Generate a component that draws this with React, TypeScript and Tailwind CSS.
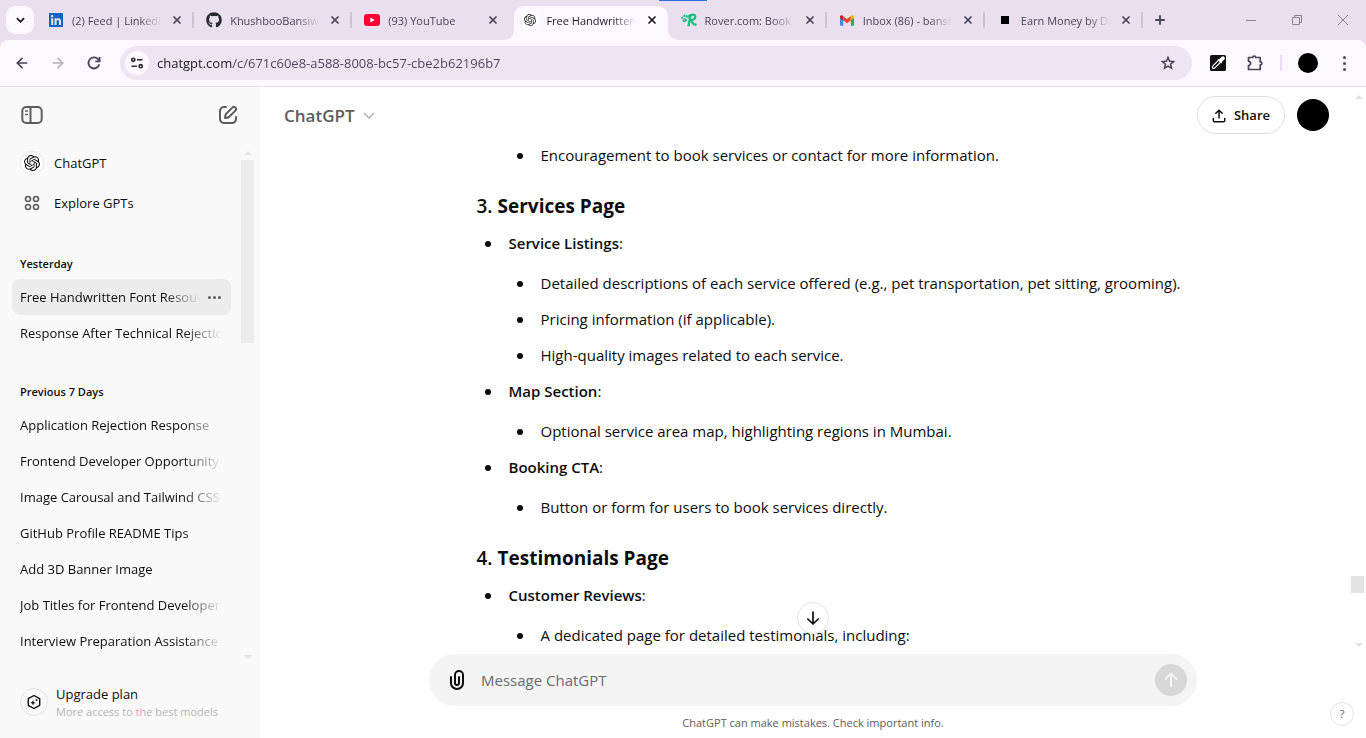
import type { ReactNode } from "react";
import { FaGithub, FaLinkedin } from "react-icons/fa";
import { SiOpenai } from "react-icons/si";
import { ArrowLeft, ArrowRight, Plus, X } from "lucide-react";

type Tab = { title: string; icon: ReactNode; active?: boolean; divider?: boolean };

const GmailIcon = () => (
  <svg viewBox="0 0 24 18" className="h-[11px] w-[14px]">
    <path fill="#4285f4" d="M0 3v13.4C0 17.3.7 18 1.600 18H5.500V7z" />
    <path fill="#34a853" d="M18.500 7v11h3.900c.9 0 1.600-.7 1.600-1.600V3z" />
    <path fill="#ea4335" d="M5.500 8.600V1.600L12 6.500l6.500-4.900v7L12 13.500z" />
    <path fill="#c5221f" d="M0 2.500C0 .3 2.500-.8 4.200.6L5.500 1.600v7L0 4.500z" />
    <path fill="#fbbc04" d="M24 2.500c0-2.200-2.500-3.300-4.200-1.900l-1.300 1v7L24 4.500z" />
  </svg>
);

const RoverIcon = () => (
  <svg viewBox="0 0 16 14" className="h-[14px] w-4">
    <g fill="#0fbf7a">
      <ellipse cx="1.300" cy="5" rx="1" ry="1.300" />
      <ellipse cx="3.300" cy="2.900" rx="1" ry="1.400" />
      <ellipse cx="5.700" cy="3.400" rx="0.9" ry="1.300" />
      <path d="M1.800 7.800C2 5.700 4 4.800 5.300 5.800c1 .9.700 2.600-.4 2.700-1 0-1 .6-1.800.6s-1.400-.6-1.300-1.300z" />
    </g>
    <path
      d="M9.500 2.300 7.600 12.500M7.400 3.600c2-2.200 7-3 6.900.2-.1 2.300-2.800 3.300-5 3.300M10.500 7.300c.8 2.300 1.800 4.800 4.200 4.300"
      fill="none"
      stroke="#0fbf7a"
      strokeWidth="2.200"
      strokeLinecap="round"
    />
  </svg>
);

const tabs: Tab[] = [
  { title: "(2) Feed | LinkedIn", icon: <FaLinkedin className="size-4 text-[#0a66c2]" />, divider: true },
  { title: "KhushbooBansiwal", icon: <FaGithub className="size-4 text-[#24292f]" />, divider: true },
  {
    title: "(93) YouTube",
    icon: (
      <svg viewBox="0 0 16 12" className="h-3 w-4">
        <rect width="16" height="12" rx="3" fill="#ff0033" />
        <path d="M6.300 3.500v5L10.700 6z" fill="#fff" />
      </svg>
    ),
  },
  {
    title: "Free Handwritten Font",
    icon: (
      <span className="flex size-4 items-center justify-center rounded-sm bg-white">
        <SiOpenai className="size-3 text-[#222]" />
      </span>
    ),
    active: true,
  },
  { title: "Rover.com: Book Pet", icon: <RoverIcon />, divider: true },
  { title: "Inbox (86) - bansiwal", icon: <GmailIcon />, divider: true },
  { title: "Earn Money by Doing", icon: <span className="size-2 bg-black" />, divider: true },
];

const TabCurve = ({ flip }: { flip?: boolean }) => (
  <svg
    viewBox="0 0 10 10"
    className={
      flip
        ? "absolute -right-[10px] bottom-0 size-[10px] -scale-x-100"
        : "absolute bottom-0 -left-[10px] size-[10px]"
    }
  >
    <path d="M10 0v10H0A10 10 0 0 0 10 0z" fill="#fdf7ff" />
  </svg>
);

function TabStrip() {
  return (
    <div className="relative flex h-10 items-stretch bg-[#e9dfee] pl-[6px]">
      <div className="absolute top-0 left-1/2 -ml-6 h-px w-12 bg-[#2f6fd6]" />
      <button
        aria-label="Search tabs"
        className="mt-[6px] mr-px flex size-7 shrink-0 items-center justify-center rounded-[9px] bg-[#fdf7ff]"
      >
        <svg viewBox="0 0 10 6" className="h-[6px] w-[9px]" fill="none" stroke="#1d1b20" strokeWidth="2">
          <path d="M1 1l4 4 4-4" />
        </svg>
      </button>
      <div className="flex min-w-0 flex-[0_1_1107px]">
        {tabs.map((tab) => (
          <div key={tab.title} className="relative flex min-w-0 flex-1 items-end pl-[3px]">
            <div
              className={
                tab.active
                  ? "relative ml-[2px] flex h-[34px] min-w-0 flex-1 items-center rounded-t-[10px] bg-[#fdf7ff] pr-[10px] pb-[6px] pl-2"
                  : "ml-[2px] flex h-[34px] min-w-0 flex-1 items-center pr-[10px] pb-[6px] pl-2"
              }
            >
              {tab.active && <TabCurve />}
              {tab.active && <TabCurve flip />}
              <span className="flex w-4 shrink-0 items-center justify-center">{tab.icon}</span>
              <span
                className={
                  tab.active
                    ? "ml-2 min-w-0 flex-1 overflow-hidden mask-r-from-75% pt-[2px] text-[11px] leading-4 whitespace-nowrap text-[#1d1b20]"
                    : "ml-2 min-w-0 flex-1 overflow-hidden mask-r-from-75% pt-[2px] text-[11px] leading-4 whitespace-nowrap text-[#4a4458]"
                }
              >
                {tab.title}
              </span>
              <button aria-label="Close tab" className="ml-[10px] flex size-3 shrink-0 items-center justify-center">
                <X className={tab.active ? "size-3 text-[#1d1b20]" : "size-3 text-[#4a4458]"} strokeWidth={3.5} />
              </button>
            </div>
            {tab.divider && <span className="absolute top-3 -right-px h-4 w-[2px] rounded-full bg-[#cbc3cf]" />}
          </div>
        ))}
      </div>
      <button aria-label="New tab" className="ml-2 flex w-5 shrink-0 items-center justify-center">
        <Plus className="size-[14px] text-[#4a4458]" strokeWidth={3.2} />
      </button>
      <div className="flex-1" />
      <div className="flex shrink-0 text-[#8a838f]">
        <button aria-label="Minimize" className="flex w-[46px] items-center justify-center">
          <span className="h-px w-[10px] bg-[#8a838f]" />
        </button>
        <button aria-label="Restore" className="flex w-[46px] items-center justify-center">
          <svg viewBox="0 0 10 10" className="size-[10px]" fill="none" stroke="currentColor">
            <path d="M.5 2.500h7v7h-7zM2.500 2.500v-2h7v7h-2" />
          </svg>
        </button>
        <button aria-label="Close" className="flex w-[46px] items-center justify-center">
          <svg viewBox="0 0 10 10" className="size-[10px]" fill="none" stroke="currentColor">
            <path d="M0 0l10 10M10 0L0 10" />
          </svg>
        </button>
      </div>
    </div>
  );
}

function Toolbar() {
  return (
    <div className="bg-[#e9dfee]">
      <div className="flex h-[47px] items-center rounded-t-[8px] border-b border-[#e6dfe9] bg-[#fdf7ff] px-[14px]">
        <button aria-label="Back" className="flex w-4 justify-center">
          <ArrowLeft className="size-4 text-[#4a4458]" strokeWidth={2.5} />
        </button>
        <button aria-label="Forward" className="ml-5 flex w-4 justify-center">
          <ArrowRight className="size-4 text-[#b5aeb9]" strokeWidth={2.5} />
        </button>
        <button aria-label="Reload" className="ml-5 flex w-4 justify-center">
          <svg viewBox="0 0 16 16" className="size-4" fill="none" stroke="#4a4458" strokeWidth="1.800">
            <path d="M13.300 9.300A5.500 5.500 0 1 1 12 4.200l1.500 1.600" />
            <path d="M13.600 2v4.300H9.300" />
          </svg>
        </button>
        <div className="ml-[18px] flex h-[34px] min-w-0 flex-1 items-center rounded-full bg-[#ede5f1] pr-[15px] pl-[5px]">
          <button aria-label="Site information" className="flex size-6 shrink-0 items-center justify-center rounded-full bg-[#fdf7ff]">
            <svg viewBox="0 0 14 12" className="h-3 w-[14px]" fill="none" stroke="#2b2730" strokeWidth="1.600">
              <circle cx="3.300" cy="2.800" r="1.600" />
              <path d="M7 2.800h5.500M1.500 9.200H7" />
              <circle cx="10.700" cy="9.200" r="1.600" />
            </svg>
          </button>
          <input
            type="text"
            aria-label="Address"
            defaultValue="chatgpt.com/c/671c60e8-a588-8008-bc57-cbe2b62196b7"
            className="ml-2 min-w-0 flex-1 bg-[linear-gradient(90deg,#1d1b20_76px,#4a4458_76px)] bg-clip-text pt-[2px] text-[13px] text-transparent outline-none"
          />
          <button aria-label="Bookmark this tab" className="flex shrink-0">
            <svg viewBox="0 0 24 24" className="size-[18px]" fill="#4a4458">
              <path d="m8.850 16.825 3.150-1.900 3.150 1.925-.825-3.600 2.775-2.400-3.650-.325-1.450-3.400-1.450 3.375-3.650.325 2.775 2.425zM5.825 21l1.625-7.025L2 9.250l7.200-.625L12 2l2.800 6.625 7.200.625-5.450 4.725L18.175 21 12 17.275z" />
            </svg>
          </button>
        </div>
        <button aria-label="Color picker extension" className="ml-[18px] flex">
          <svg viewBox="0 0 16 16" className="size-4">
            <rect width="16" height="16" rx="1.500" fill="#111" />
            <path d="M8.600 5.200 3.400 10.400c-.9.900-1.300 2.200-.8 2.800.6.600 1.900.1 2.800-.8l5.200-5.200z" fill="none" stroke="#fff" strokeWidth="1.200" />
            <path d="M7.600 4.300 9.400 4l2-2.100c1-1 2.400-.8 3 0s.6 2-.3 2.900L12 6.800l-.4 1.800z" fill="#fff" />
          </svg>
        </button>
        <button aria-label="Extensions" className="ml-5 flex">
          <svg viewBox="0 0 18 18" className="size-[18px]" fill="none" stroke="#4a4458" strokeWidth="1.700" strokeLinejoin="round">
            <path d="M2.500 3.500h4.300c0-2 2.900-2 2.900 0h4.500v4.400c2.200 0 2.200 3 0 3v4.600H2.500v-4c2.800-.4 2.800-4 0-4.200z" />
          </svg>
        </button>
        <span className="ml-4 h-4 w-[2px] bg-[#eadcfb]" />
        <button aria-label="Profile" className="ml-4 size-5 rounded-full bg-black" />
        <button aria-label="Browser menu" className="ml-[18px] flex w-4 flex-col items-center gap-[3px]">
          <span className="size-[3px] rounded-full bg-[#4a4458]" />
          <span className="size-[3px] rounded-full bg-[#4a4458]" />
          <span className="size-[3px] rounded-full bg-[#4a4458]" />
        </button>
      </div>
    </div>
  );
}

const groups = [
  { label: "Yesterday", items: ["Free Handwritten Font Resources", "Response After Technical Rejection"] },
  {
    label: "Previous 7 Days",
    items: [
      "Application Rejection Response",
      "Frontend Developer Opportunity",
      "Image Carousal and Tailwind CSS",
      "GitHub Profile README Tips",
      "Add 3D Banner Image",
      "Job Titles for Frontend Developer",
      "Interview Preparation Assistance",
    ],
  },
];

const ScrollArrow = ({ down }: { down?: boolean }) => (
  <svg viewBox="0 0 8 4" className={down ? "h-1 w-2 rotate-180" : "h-1 w-2"}>
    <path d="M0 4l4-4 4 4z" fill="#e3e3e3" />
  </svg>
);

function Sidebar() {
  return (
    <aside className="flex w-[260px] shrink-0 flex-col bg-[#f9f9f9]">
      <div className="flex h-14 shrink-0 items-center justify-between px-5 text-[#5d5d5d]">
        <button aria-label="Close sidebar" className="flex">
          <svg viewBox="0 0 24 24" className="size-6" fill="none" stroke="currentColor" strokeWidth="2" strokeLinecap="round">
            <rect x="2.300" y="4" width="19.400" height="16" rx="4" />
            <path d="M10.500 4v16" />
            <path d="M5.700 8h1.600M5.700 11.500h1.600" strokeWidth="1.600" />
          </svg>
        </button>
        <button aria-label="New chat" className="flex">
          <svg viewBox="0 0 24 24" className="size-6" fill="currentColor" fillRule="evenodd">
            <path d="M15.673 3.913a3.121 3.121 0 1 1 4.414 4.414l-5.937 5.937a5 5 0 0 1-2.829 1.415l-2.180.311a1 1 0 0 1-1.131-1.131l.311-2.180A5 5 0 0 1 9.736 9.850zm3 1.414a1.121 1.121 0 0 0-1.586 0l-5.937 5.937a3 3 0 0 0-.849 1.697l-.123.860.860-.123a3 3 0 0 0 1.698-.849l5.937-5.936a1.121 1.121 0 0 0 0-1.586zM11 4A1 1 0 0 1 10 5c-.998 0-1.702.008-2.253.060-.54.052-.862.141-1.109.267a3 3 0 0 0-1.311 1.311c-.134.263-.226.611-.276 1.216C5.001 8.471 5 9.263 5 10.400v3.200c0 1.137.001 1.929.051 2.546.050.605.142.953.276 1.216a3 3 0 0 0 1.311 1.311c.263.134.611.226 1.216.276.617.050 1.409.051 2.546.051h3.200c1.137 0 1.929-.001 2.546-.051.605-.050.953-.142 1.216-.276a3 3 0 0 0 1.311-1.311c.126-.247.215-.569.266-1.109.053-.551.060-1.255.061-2.254a1 1 0 1 1 2 .002c-.001.978-.007 1.780-.070 2.442-.064.673-.192 1.271-.475 1.827a5 5 0 0 1-2.185 2.185c-.592.302-1.232.428-1.961.487-.708.058-1.582.058-2.666.058h-3.286c-1.084 0-1.958 0-2.666-.058-.729-.059-1.369-.185-1.961-.487a5 5 0 0 1-2.185-2.185c-.302-.592-.428-1.232-.487-1.961C3 15.601 3 14.727 3 13.643v-3.286c0-1.084 0-1.958.058-2.666.059-.729.185-1.369.487-1.961A5 5 0 0 1 5.730 3.545c.556-.283 1.154-.411 1.827-.475C8.219 3.007 9.021 3.001 10 3a1 1 0 0 1 1 1z" />
          </svg>
        </button>
      </div>
      <div className="flex min-h-0 flex-1 pr-[6px]">
        <nav className="min-w-0 flex-1 overflow-hidden pr-[10px] pl-3 text-[13px] text-[#0d0d0d]">
          <a href="#chatgpt" className="flex h-10 items-center gap-[10px] px-2">
            <span className="flex size-6 items-center justify-center rounded-full border border-[#e8e8e8] bg-white">
              <SiOpenai className="size-4" />
            </span>
            <span className="pt-[2px]">ChatGPT</span>
          </a>
          <a href="#explore" className="flex h-10 items-center gap-[10px] px-2">
            <span className="flex size-6 items-center justify-center">
              <svg viewBox="0 0 16 16" className="size-4" fill="none" stroke="#5d5d5d" strokeWidth="1.600">
                <circle cx="4" cy="4" r="2.500" />
                <circle cx="12" cy="4" r="2.500" />
                <circle cx="4" cy="12" r="2.500" />
                <circle cx="12" cy="12" r="2.500" />
              </svg>
            </span>
            <span className="pt-[2px]">Explore GPTs</span>
          </a>
          {groups.map((group, g) => (
            <section key={group.label} className="pt-[26px]">
              <h2 className="h-[30px] px-2 text-[11px] leading-[30px] font-semibold">{group.label}</h2>
              {group.items.map((item, i) => (
                <a
                  key={item}
                  href="#chat"
                  className={
                    g === 0 && i === 0
                      ? "flex h-9 items-center rounded-lg bg-[#ececec] px-2"
                      : "flex h-9 items-center px-2"
                  }
                >
                  <span className="min-w-0 flex-1 overflow-hidden mask-r-from-80% pt-[2px] whitespace-nowrap">{item}</span>
                  {g === 0 && i === 0 && (
                    <span className="mr-[2px] ml-2 flex gap-[2px]">
                      <span className="size-[3px] rounded-full bg-[#5d5d5d]" />
                      <span className="size-[3px] rounded-full bg-[#5d5d5d]" />
                      <span className="size-[3px] rounded-full bg-[#5d5d5d]" />
                    </span>
                  )}
                </a>
              ))}
            </section>
          ))}
        </nav>
        <div className="flex w-[13px] shrink-0 flex-col items-center pt-2 pb-1">
          <ScrollArrow />
          <div className="mt-[5px] h-[183px] w-full bg-[#ececec]" />
          <div className="flex-1" />
          <ScrollArrow down />
        </div>
      </div>
      <a href="#upgrade" className="flex h-[75px] shrink-0 items-center gap-2 px-5 pt-[2px] text-[#0d0d0d]">
        <span className="flex size-7 items-center justify-center rounded-full border border-[#e3e3e3]">
          <svg viewBox="0 0 16 16" className="size-4" fill="none" stroke="currentColor" strokeWidth="1.400" strokeLinejoin="round">
            <path d="M8 1.500 13.700 4.700v6.600L8 14.500l-5.700-3.200V4.700z" />
            <path d="M7 6l.8 1.900 1.900.8-1.900.8L7 11.400l-.8-1.900-1.900-.8 1.900-.8zM10.500 4.500l.4 1.100 1.100.4-1.100.4-.4 1.100-.4-1.100L9 6l1.100-.4z" fill="currentColor" stroke="none" />
          </svg>
        </span>
        <span className="flex flex-col pt-px">
          <span className="text-[13px] leading-5">Upgrade plan</span>
          <span className="text-[11px] leading-4 text-[#b4b4b4]">More access to the best models</span>
        </span>
      </a>
    </aside>
  );
}

type Entry = { label: string; points: string[] };

const sections: { number: string; title: string; entries: Entry[] }[] = [
  {
    number: "3.",
    title: "Services Page",
    entries: [
      {
        label: "Service Listings",
        points: [
          "Detailed descriptions of each service offered (e.g., pet transportation, pet sitting, grooming).",
          "Pricing information (if applicable).",
          "High-quality images related to each service.",
        ],
      },
      { label: "Map Section", points: ["Optional service area map, highlighting regions in Mumbai."] },
      { label: "Booking CTA", points: ["Button or form for users to book services directly."] },
    ],
  },
  {
    number: "4.",
    title: "Testimonials Page",
    entries: [{ label: "Customer Reviews", points: ["A dedicated page for detailed testimonials, including:"] }],
  },
];

const Bullet = () => <span className="mt-3 mr-[18px] size-[6px] shrink-0 rounded-full bg-[#0d0d0d]" />;

const Point = ({ children }: { children: ReactNode }) => (
  <li className="flex pl-2">
    <Bullet />
    <span>{children}</span>
  </li>
);

function Thread() {
  return (
    <div className="min-h-0 flex-1 overflow-hidden">
      <article className="mx-auto max-w-[768px] pl-[55px] text-[15px] leading-7 text-[#0d0d0d]">
        <ul className="pl-8">
          <Point>Encouragement to book services or contact for more information.</Point>
        </ul>
        {sections.map((section) => (
          <section key={section.title}>
            <h3 className="mt-[21px] mb-[7px] text-[19px] leading-8 font-semibold">
              {section.number} <strong className="font-bold">{section.title}</strong>
            </h3>
            <ul className="flex flex-col gap-2">
              {section.entries.map((entry) => (
                <li key={entry.label} className="flex pl-2">
                  <Bullet />
                  <div>
                    <p>
                      <strong className="font-semibold">{entry.label}</strong>:
                    </p>
                    <ul className="mt-3 flex flex-col gap-2">
                      {entry.points.map((point) => (
                        <Point key={point}>{point}</Point>
                      ))}
                    </ul>
                  </div>
                </li>
              ))}
            </ul>
          </section>
        ))}
      </article>
    </div>
  );
}

function Composer() {
  return (
    <div className="relative shrink-0 px-4">
      <button
        aria-label="Scroll to bottom"
        className="absolute -top-[52px] left-1/2 flex size-8 -translate-x-1/2 items-center justify-center rounded-full border border-[#e3e3e3] bg-white"
      >
        <svg viewBox="0 0 14 16" className="h-4 w-[14px]" fill="none" stroke="#0d0d0d" strokeWidth="1.700" strokeLinecap="round" strokeLinejoin="round">
          <path d="M7 2v12M1.800 9 7 14l5.200-5" />
        </svg>
      </button>
      <form className="mx-auto flex h-[52px] max-w-[768px] items-center rounded-full bg-[#f4f4f4] pr-[10px] pl-4">
        <button type="button" aria-label="Attach file" className="flex">
          <svg viewBox="0 0 24 24" className="size-6" fill="#0d0d0d" fillRule="evenodd">
            <path d="M9 7a5 5 0 0 1 10 0v8a7 7 0 1 1-14 0V9a1 1 0 0 1 2 0v6a5 5 0 0 0 10 0V7a3 3 0 1 0-6 0v8a1 1 0 1 0 2 0V9a1 1 0 1 1 2 0v6a3 3 0 1 1-6 0z" />
          </svg>
        </button>
        <input
          type="text"
          aria-label="Message ChatGPT"
          placeholder="Message ChatGPT"
          className="ml-3 min-w-0 flex-1 bg-transparent text-[15px] outline-none placeholder:text-[#6b6b6b]"
        />
        <button type="button" aria-label="Send" className="flex size-8 items-center justify-center rounded-full bg-[#d7d7d7]">
          <svg viewBox="0 0 14 16" className="h-4 w-[14px]" fill="none" stroke="#f4f4f4" strokeWidth="2" strokeLinecap="round" strokeLinejoin="round">
            <path d="M7 14.500V2M1.500 7 7 1.500 12.500 7" />
          </svg>
        </button>
      </form>
      <p className="h-8 pt-px text-center text-[11px] leading-8 text-[#5d5d5d]">
        ChatGPT can make mistakes. Check important info.
      </p>
      <button
        aria-label="Help"
        className="absolute right-3 bottom-3 flex size-6 items-center justify-center rounded-full border border-[#e3e3e3] text-[11px] text-[#5d5d5d]"
      >
        ?
      </button>
    </div>
  );
}

export default function App() {
  return (
    <div className="flex h-screen flex-col overflow-hidden bg-white font-['Open_Sans','Noto_Sans',sans-serif]">
      <TabStrip />
      <Toolbar />
      <div className="flex min-h-0 flex-1">
        <Sidebar />
        <main className="flex min-w-0 flex-1 flex-col">
          <div className="flex min-h-0 flex-1">
            <div className="flex min-w-0 flex-1 flex-col">
              <header className="flex h-[54px] shrink-0 items-center pt-[2px] pr-[22px] pl-6">
                <button className="flex items-center gap-2 pt-px text-[17px] font-semibold text-[#5d5d5d]">
                  ChatGPT
                  <svg viewBox="0 0 12 7" className="h-[7px] w-3" fill="none" stroke="#b4b4b4" strokeWidth="1.600">
                    <path d="M1 1l5 5 5-5" />
                  </svg>
                </button>
                <div className="flex-1" />
                <button className="flex h-[38px] items-center gap-2 rounded-full border border-[#e0e0e0] px-[14px] pt-px text-[13px] font-semibold text-[#0d0d0d]">
                  <svg viewBox="0 0 14 14" className="size-[14px]" fill="none" stroke="currentColor" strokeWidth="1.500" strokeLinecap="round" strokeLinejoin="round">
                    <path d="M7 9V1.500M3.800 4.300 7 1.200l3.200 3.100M1.300 9.500v2c0 .8.500 1.300 1.300 1.300h8.800c.8 0 1.300-.5 1.300-1.300v-2" />
                  </svg>
                  Share
                </button>
                <button aria-label="Account" className="ml-3 size-8 rounded-full bg-black" />
              </header>
              <Thread />
            </div>
            <div className="flex w-[15px] shrink-0 flex-col items-center pt-2 pb-[7px]">
              <ScrollArrow />
              <div className="flex-[477_1_0%]" />
              <div className="h-[17px] w-[13px] self-start bg-[#e3e3e3]" />
              <div className="flex-[50_1_0%]" />
              <ScrollArrow down />
            </div>
          </div>
          <Composer />
        </main>
      </div>
    </div>
  );
}
